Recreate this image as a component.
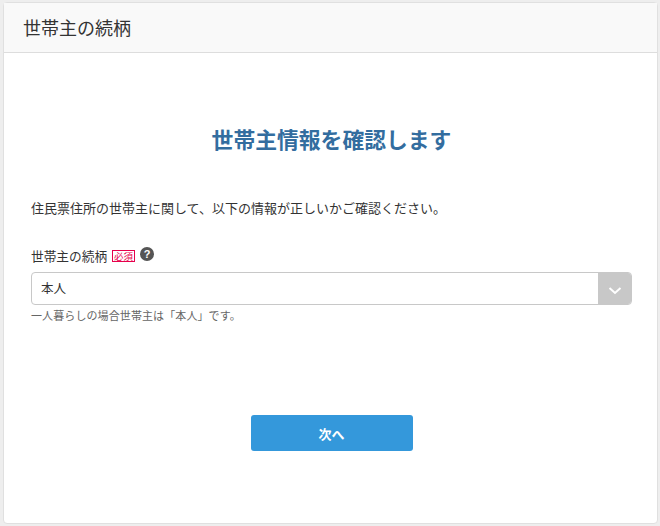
<div class="page">
    <section class="card">
        <header class="card-head">世帯主の続柄</header>
        <div class="card-body">
            <h1>世帯主情報を確認します</h1>
            <p class="lead">住民票住所の世帯主に関して、以下の情報が正しいかご確認ください。</p>
            <div class="field">
                <div class="label-row">
                    <span class="label">世帯主の続柄</span>
                    <span class="required">必須</span>
                    <span class="help">?</span>
                </div>
                <div class="select">
                    <span class="value">本人</span>
                    <span class="arrow">
                        <svg width="14" height="8" viewBox="0 0 14 8">
                            <path d="M1.5 1 L7 6 L12.5 1" fill="none" stroke="#fff" stroke-width="2" />
                        </svg>
                    </span>
                </div>
                <p class="note">一人暮らしの場合世帯主は「本人」です。</p>
            </div>
            <div class="actions">
                <button type="button">次へ</button>
            </div>
        </div>
    </section>
</div>

<style>
    :global(body) {
        background: #eeeeee;
        font-family: "Noto Sans CJK JP", "Liberation Sans", sans-serif;
    }

    .page {
        height: 526px;
        box-sizing: border-box;
        padding: 2px 2px 2px 3px;
        overflow: hidden;
    }

    .card {
        height: 100%;
        box-sizing: border-box;
        background: #fff;
        border: 1px solid #e0e0e0;
        border-radius: 4px;
        display: flex;
        flex-direction: column;
    }

    .card-head {
        height: 50px;
        box-sizing: border-box;
        padding-left: 19px;
        background: #f9f9f9;
        border-bottom: 1px solid #dddddd;
        font-size: 18px;
        line-height: 48px;
        color: #333;
    }

    .card-body {
        flex: 1;
        padding: 0 25px 0 27px;
    }

    h1 {
        margin: 71px 0 0;
        text-align: center;
        font-size: 21.8px;
        line-height: 30px;
        font-weight: 700;
        color: #336d9f;
    }

    .lead {
        margin: 44px 0 0;
        font-size: 13px;
        line-height: 20px;
        color: #333;
    }

    .field {
        margin-top: 27px;
    }

    .label-row {
        display: flex;
        align-items: center;
        height: 20px;
        font-size: 12.7px;
        color: #333;
    }

    .required {
        margin: 1px 0 0 5px;
        box-sizing: border-box;
        width: 23px;
        height: 12px;
        border: 1px solid #e6004c;
        font-size: 9.5px;
        line-height: 10px;
        text-align: center;
        color: #e6004c;
    }

    .help {
        margin: -2px 0 0 5px;
        width: 14px;
        height: 14px;
        border-radius: 50%;
        background: #555;
        color: #fff;
        font-family: "Liberation Sans", sans-serif;
        font-size: 11px;
        font-weight: 700;
        line-height: 14px;
        text-align: center;
    }

    .select {
        margin-top: 7px;
        height: 33px;
        box-sizing: border-box;
        border: 1px solid #c8c8c8;
        border-radius: 4px;
        display: flex;
        align-items: center;
        justify-content: space-between;
        overflow: hidden;
    }

    .value {
        padding: 0 0 2px 9px;
        font-size: 12.5px;
        color: #333;
    }

    .arrow {
        width: 33px;
        height: 100%;
        background: #c8c8c8;
        display: flex;
        align-items: center;
        justify-content: center;
    }

    .arrow svg {
        margin-top: 4px;
    }

    .note {
        margin: 2px 0 0;
        font-size: 11px;
        letter-spacing: 0.1px;
        line-height: 16px;
        color: #666;
    }

    .actions {
        margin-top: 92px;
        display: flex;
        justify-content: center;
    }

    button {
        width: 162px;
        height: 36px;
        border: 0;
        border-radius: 3px;
        background: #3498db;
        color: #fff;
        font-family: inherit;
        font-size: 13px;
        font-weight: 700;
    }
</style>
